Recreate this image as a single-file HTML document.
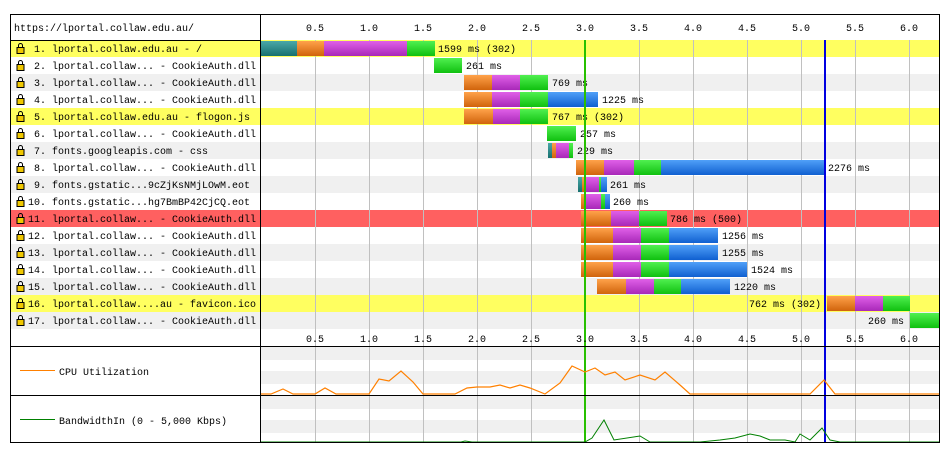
<!DOCTYPE html>
<html><head><meta charset="utf-8"><style>
html,body{margin:0;padding:0;background:#fff;width:951px;height:455px;overflow:hidden}
text{font-family:"Liberation Mono","DejaVu Sans Mono",monospace;font-size:10px;fill:#000}
</style></head><body>
<svg width="951" height="455" viewBox="0 0 951 455" xmlns="http://www.w3.org/2000/svg">
<defs>
<linearGradient id="t" x1="0" y1="0" x2="0" y2="1"><stop offset="0" stop-color="#4aa8a8"/><stop offset="1" stop-color="#17706f"/></linearGradient>
<linearGradient id="o" x1="0" y1="0" x2="0" y2="1"><stop offset="0" stop-color="#ffa24a"/><stop offset="1" stop-color="#d0640c"/></linearGradient>
<linearGradient id="m" x1="0" y1="0" x2="0" y2="1"><stop offset="0" stop-color="#e060e8"/><stop offset="1" stop-color="#a828b8"/></linearGradient>
<linearGradient id="g" x1="0" y1="0" x2="0" y2="1"><stop offset="0" stop-color="#50f050"/><stop offset="1" stop-color="#10c010"/></linearGradient>
<linearGradient id="b" x1="0" y1="0" x2="0" y2="1"><stop offset="0" stop-color="#50a0f8"/><stop offset="1" stop-color="#1060d0"/></linearGradient>
<g id="lock"><rect x="-3.5" y="-1.5" width="7" height="6" fill="#f0c800" stroke="#000" stroke-width="1"/><path d="M-2 -1.5 V-3.5 A2 2 0 0 1 2 -3.5 V-1.5" fill="none" stroke="#000" stroke-width="1"/></g>
</defs>
<rect x="10" y="40" width="930" height="17" fill="#ffff60"/>
<rect x="10" y="74" width="930" height="17" fill="#f0f0f0"/>
<rect x="10" y="108" width="930" height="17" fill="#ffff60"/>
<rect x="10" y="142" width="930" height="17" fill="#f0f0f0"/>
<rect x="10" y="176" width="930" height="17" fill="#f0f0f0"/>
<rect x="10" y="210" width="930" height="17" fill="#ff6060"/>
<rect x="10" y="244" width="930" height="17" fill="#f0f0f0"/>
<rect x="10" y="278" width="930" height="17" fill="#f0f0f0"/>
<rect x="10" y="295" width="930" height="17" fill="#ffff60"/>
<rect x="10" y="312" width="930" height="17" fill="#f0f0f0"/>
<rect x="261" y="347" width="679" height="13" fill="#f0f0f0"/>
<rect x="261" y="371" width="679" height="13" fill="#f0f0f0"/>
<rect x="261" y="396" width="679" height="13" fill="#f0f0f0"/>
<rect x="261" y="420" width="679" height="13" fill="#f0f0f0"/>
<g stroke="#c0c0c0" stroke-width="1">
<path d="M315.5 40V443M369.5 40V443M423.5 40V443M477.5 40V443M531.5 40V443M585.5 40V443M639.5 40V443M693.5 40V443M747.5 40V443M801.5 40V443M855.5 40V443M909.5 40V443"/>
</g>
<g>
<rect x="261" y="41" width="36" height="15" fill="url(#t)"/><rect x="297" y="41" width="27" height="15" fill="url(#o)"/><rect x="324" y="41" width="83" height="15" fill="url(#m)"/><rect x="407" y="41" width="28" height="15" fill="url(#g)"/>
<rect x="434" y="58" width="28" height="15" fill="url(#g)"/>
<rect x="464" y="75" width="28" height="15" fill="url(#o)"/><rect x="492" y="75" width="28" height="15" fill="url(#m)"/><rect x="520" y="75" width="28" height="15" fill="url(#g)"/>
<rect x="464" y="92" width="28" height="15" fill="url(#o)"/><rect x="492" y="92" width="28" height="15" fill="url(#m)"/><rect x="520" y="92" width="28" height="15" fill="url(#g)"/><rect x="548" y="92" width="50" height="15" fill="url(#b)"/>
<rect x="464" y="109" width="29" height="15" fill="url(#o)"/><rect x="493" y="109" width="27" height="15" fill="url(#m)"/><rect x="520" y="109" width="28" height="15" fill="url(#g)"/>
<rect x="547" y="126" width="29" height="15" fill="url(#g)"/>
<rect x="548" y="143" width="4" height="15" fill="url(#t)"/><rect x="552" y="143" width="4" height="15" fill="url(#o)"/><rect x="556" y="143" width="13" height="15" fill="url(#m)"/><rect x="569" y="143" width="4" height="15" fill="url(#g)"/>
<rect x="576" y="160" width="28" height="15" fill="url(#o)"/><rect x="604" y="160" width="30" height="15" fill="url(#m)"/><rect x="634" y="160" width="27" height="15" fill="url(#g)"/><rect x="661" y="160" width="164" height="15" fill="url(#b)"/>
<rect x="578" y="177" width="4" height="15" fill="url(#t)"/><rect x="582" y="177" width="4" height="15" fill="url(#o)"/><rect x="586" y="177" width="13" height="15" fill="url(#m)"/><rect x="599" y="177" width="2" height="15" fill="url(#g)"/><rect x="601" y="177" width="6" height="15" fill="url(#b)"/>
<rect x="581" y="194" width="5" height="15" fill="url(#o)"/><rect x="586" y="194" width="15" height="15" fill="url(#m)"/><rect x="601" y="194" width="4" height="15" fill="url(#g)"/><rect x="605" y="194" width="5" height="15" fill="url(#b)"/>
<rect x="581" y="211" width="30" height="15" fill="url(#o)"/><rect x="611" y="211" width="28" height="15" fill="url(#m)"/><rect x="639" y="211" width="28" height="15" fill="url(#g)"/>
<rect x="581" y="228" width="32" height="15" fill="url(#o)"/><rect x="613" y="228" width="28" height="15" fill="url(#m)"/><rect x="641" y="228" width="28" height="15" fill="url(#g)"/><rect x="669" y="228" width="49" height="15" fill="url(#b)"/>
<rect x="581" y="245" width="32" height="15" fill="url(#o)"/><rect x="613" y="245" width="28" height="15" fill="url(#m)"/><rect x="641" y="245" width="28" height="15" fill="url(#g)"/><rect x="669" y="245" width="49" height="15" fill="url(#b)"/>
<rect x="581" y="262" width="32" height="15" fill="url(#o)"/><rect x="613" y="262" width="28" height="15" fill="url(#m)"/><rect x="641" y="262" width="28" height="15" fill="url(#g)"/><rect x="669" y="262" width="78" height="15" fill="url(#b)"/>
<rect x="597" y="279" width="29" height="15" fill="url(#o)"/><rect x="626" y="279" width="28" height="15" fill="url(#m)"/><rect x="654" y="279" width="27" height="15" fill="url(#g)"/><rect x="681" y="279" width="49" height="15" fill="url(#b)"/>
<rect x="827" y="296" width="28" height="15" fill="url(#o)"/><rect x="855" y="296" width="28" height="15" fill="url(#m)"/><rect x="883" y="296" width="27" height="15" fill="url(#g)"/>
<rect x="910" y="313" width="29" height="15" fill="url(#g)"/><rect x="939" y="313" width="1" height="15" fill="url(#b)"/>
</g>
<g>
<text x="438" y="52">1599 ms (302)</text>
<text x="466" y="69">261 ms</text>
<text x="552" y="86">769 ms</text>
<text x="602" y="103">1225 ms</text>
<text x="552" y="120">767 ms (302)</text>
<text x="580" y="137">257 ms</text>
<text x="577" y="154">229 ms</text>
<text x="828" y="171">2276 ms</text>
<text x="610" y="188">261 ms</text>
<text x="613" y="205">260 ms</text>
<text x="670" y="222">786 ms (500)</text>
<text x="722" y="239">1256 ms</text>
<text x="722" y="256">1255 ms</text>
<text x="751" y="273">1524 ms</text>
<text x="734" y="290">1220 ms</text>
<text x="749" y="307">762 ms (302)</text>
<text x="868" y="324">260 ms</text>
</g>
<rect x="584" y="40" width="2" height="403" fill="#28c000"/>
<rect x="824" y="40" width="2" height="403" fill="#0000e0"/>
<polyline fill="none" stroke="#ff8000" stroke-width="1.2" points="261,394 271,394 283,389 293,394 315,394 325,388 336,394 369,394 379,379 389,381 401,371 413,382 423,394 455,394 467,388 477,387 490,387 500,385 510,388 520,385 530,388 545,394 560,383 572,366 585,372 595,368 605,375 615,372 625,380 640,375 655,380 665,372 680,385 690,394 810,394 824,380 835,394 940,394"/>
<polyline fill="none" stroke="#008000" stroke-width="1" points="261,442 461,442 465,441 472,442 585,442 592,438 604,420 614,440 640,436 650,442 700,442 720,440 735,438 750,434 760,436 770,440 785,440 795,442 800,434 810,440 822,428 830,440 840,442 940,442"/>
<text x="14" y="31">https://lportal.collaw.edu.au/</text>
<g>
<use href="#lock" x="20.5" y="49"/><use href="#lock" x="20.5" y="66"/><use href="#lock" x="20.5" y="83"/><use href="#lock" x="20.5" y="100"/><use href="#lock" x="20.5" y="117"/><use href="#lock" x="20.5" y="134"/><use href="#lock" x="20.5" y="151"/><use href="#lock" x="20.5" y="168"/><use href="#lock" x="20.5" y="185"/><use href="#lock" x="20.5" y="202"/><use href="#lock" x="20.5" y="219"/><use href="#lock" x="20.5" y="236"/><use href="#lock" x="20.5" y="253"/><use href="#lock" x="20.5" y="270"/><use href="#lock" x="20.5" y="287"/><use href="#lock" x="20.5" y="304"/><use href="#lock" x="20.5" y="321"/>
</g>
<g>
<text x="28" y="52">&#160;1. lportal.collaw.edu.au - /</text>
<text x="28" y="69">&#160;2. lportal.collaw... - CookieAuth.dll</text>
<text x="28" y="86">&#160;3. lportal.collaw... - CookieAuth.dll</text>
<text x="28" y="103">&#160;4. lportal.collaw... - CookieAuth.dll</text>
<text x="28" y="120">&#160;5. lportal.collaw.edu.au - flogon.js</text>
<text x="28" y="137">&#160;6. lportal.collaw... - CookieAuth.dll</text>
<text x="28" y="154">&#160;7. fonts.googleapis.com - css</text>
<text x="28" y="171">&#160;8. lportal.collaw... - CookieAuth.dll</text>
<text x="28" y="188">&#160;9. fonts.gstatic...9cZjKsNMjLOwM.eot</text>
<text x="28" y="205">10. fonts.gstatic...hg7BmBP42CjCQ.eot</text>
<text x="28" y="222">11. lportal.collaw... - CookieAuth.dll</text>
<text x="28" y="239">12. lportal.collaw... - CookieAuth.dll</text>
<text x="28" y="256">13. lportal.collaw... - CookieAuth.dll</text>
<text x="28" y="273">14. lportal.collaw... - CookieAuth.dll</text>
<text x="28" y="290">15. lportal.collaw... - CookieAuth.dll</text>
<text x="28" y="307">16. lportal.collaw....au - favicon.ico</text>
<text x="28" y="324">17. lportal.collaw... - CookieAuth.dll</text>
</g>
<g text-anchor="middle">
<text x="315" y="31">0.5</text><text x="369" y="31">1.0</text><text x="423" y="31">1.5</text><text x="477" y="31">2.0</text><text x="531" y="31">2.5</text><text x="585" y="31">3.0</text><text x="639" y="31">3.5</text><text x="693" y="31">4.0</text><text x="747" y="31">4.5</text><text x="801" y="31">5.0</text><text x="855" y="31">5.5</text><text x="909" y="31">6.0</text>
</g>
<rect x="261" y="330" width="679" height="16" fill="#fff"/>
<rect x="584" y="330" width="2" height="16" fill="#28c000"/>
<rect x="824" y="330" width="2" height="16" fill="#0000e0"/>
<g stroke="#c0c0c0"><path d="M315.5 330V346M369.5 330V346M423.5 330V346M477.5 330V346M531.5 330V346M639.5 330V346M693.5 330V346M747.5 330V346M801.5 330V346M855.5 330V346M909.5 330V346"/></g>
<g text-anchor="middle">
<text x="315" y="342">0.5</text><text x="369" y="342">1.0</text><text x="423" y="342">1.5</text><text x="477" y="342">2.0</text><text x="531" y="342">2.5</text><text x="585" y="342">3.0</text><text x="639" y="342">3.5</text><text x="693" y="342">4.0</text><text x="747" y="342">4.5</text><text x="801" y="342">5.0</text><text x="855" y="342">5.5</text><text x="909" y="342">6.0</text>
</g>
<line x1="20" y1="370.5" x2="55" y2="370.5" stroke="#ff8000"/>
<text x="59" y="375">CPU Utilization</text>
<line x1="20" y1="419.5" x2="55" y2="419.5" stroke="#008000"/>
<text x="59" y="424">BandwidthIn (0 - 5,000 Kbps)</text>
<g stroke="#000" stroke-width="1" fill="none">
<rect x="10.5" y="14.5" width="929" height="428"/>
<path d="M260.5 14V443M10 40.5H260M10 346.5H940M10 395.5H940"/>
</g>
</svg>
</body></html>
